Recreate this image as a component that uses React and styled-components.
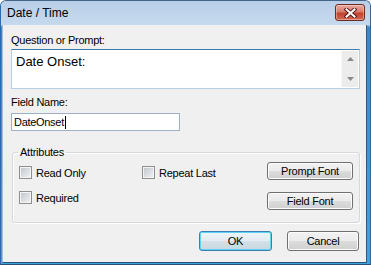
import styled, { createGlobalStyle } from 'styled-components';

const GlobalStyle = createGlobalStyle`
  html, body {
    margin: 0;
    padding: 0;
    background: #fff;
  }
  body {
    font-family: "Liberation Sans", Arial, sans-serif;
  }
`;

const Window = styled.div`
  width: 371px;
  height: 265px;
  box-sizing: border-box;
  display: flex;
  flex-direction: column;
  border: 1px solid #41648a;
  border-left-color: #2a6cab;
  border-bottom-color: #2b4f75;
  border-radius: 6px 6px 0 0;
  background: linear-gradient(to bottom, #bcd1e9 0, #c2d6ec 24px, #3f86c6 26px, #39a6dc 100%);
  overflow: hidden;
`;

const TitleBar = styled.div`
  height: 24px;
  flex: none;
  display: flex;
  justify-content: space-between;
  align-items: flex-start;
  padding: 0 5px 0 6px;
  background: linear-gradient(to bottom, #b9cfe8, #c6d9ee);
`;

const Title = styled.span`
  font-size: 12px;
  line-height: 14px;
  margin-top: 5px;
  color: #000;
`;

const CloseButton = styled.div`
  width: 30px;
  height: 17px;
  margin-top: 3px;
  box-sizing: border-box;
  border: 1px solid #6d2a20;
  border-radius: 3px;
  display: flex;
  align-items: center;
  justify-content: center;
  background: linear-gradient(to bottom, #e8a99e 0%, #d67d6f 45%, #c2432f 55%, #cf6a55 100%);
  box-shadow: inset 0 0 0 1px rgba(255, 255, 255, 0.35);
`;

const Client = styled.div`
  flex: 1;
  display: flex;
  flex-direction: column;
  margin: 0 3px 1px 1px;
  background: #f0f0f0;
  border: 1px solid #a7bcd4;
  border-top: none;
  border-right-color: #33577e;
  border-bottom-color: #2e5078;
  padding: 9px 6px 0 8px;
`;

const Label = styled.div`
  font-size: 11px;
  line-height: 13px;
  letter-spacing: -0.25px;
  color: #000;
  margin-top: ${p => p.$top || 0}px;
`;

const PromptBox = styled.div`
  margin-top: 2px;
  height: 40px;
  box-sizing: border-box;
  display: flex;
  background: #fff;
  border: 1px solid #b5cfe7;
  border-top-color: #3d7bad;
`;

const PromptText = styled.div`
  flex: 1;
  padding: 4px 0 0 4px;
  font-size: 13px;
  line-height: 15px;
  color: #000;
`;

const ScrollBar = styled.div`
  width: 16px;
  margin: 1px 1px 1px 0;
  display: flex;
  flex-direction: column;
  background: #ececec;
  border-left: 1px solid #f6f6f6;
`;

const ScrollArrow = styled.div`
  flex: 1;
  display: flex;
  align-items: center;
  justify-content: center;
  padding-${p => (p.$down ? 'top' : 'bottom')}: 2px;
`;

const NameInput = styled.div`
  margin-top: 4px;
  width: 169px;
  height: 18px;
  box-sizing: border-box;
  display: flex;
  align-items: center;
  padding-left: 2px;
  background: #fff;
  border: 1px solid #9fb0c4;
  font-size: 11px;
  letter-spacing: -0.3px;
  color: #000;
`;

const Caret = styled.span`
  display: inline-block;
  width: 1px;
  height: 13px;
  margin-left: 1px;
  background: #000;
`;

const GroupBox = styled.fieldset`
  margin: 15px 0 0 1px;
  width: 348px;
  box-sizing: border-box;
  padding: 3px 6px 12px 6px;
  border: 1px solid #d5d9dd;
  border-radius: 3px;
  box-shadow: 1px 1px 0 #fff, inset 1px 1px 0 #fff;
  display: flex;
  justify-content: space-between;
  min-width: 0;
`;

const Legend = styled.legend`
  padding: 0 2px;
  margin-left: -1px;
  font-size: 11px;
  line-height: 13px;
  letter-spacing: -0.25px;
  color: #000;
`;

const CheckGrid = styled.div`
  display: grid;
  grid-template-columns: 123px auto;
  grid-auto-rows: 13px;
  row-gap: 12px;
  padding-top: 4px;
  align-content: start;
`;

const CheckItem = styled.label`
  display: flex;
  align-items: center;
  gap: 4px;
  font-size: 11px;
  letter-spacing: -0.25px;
  color: #000;
  white-space: nowrap;
`;

const CheckBox = styled.span`
  width: 13px;
  height: 13px;
  box-sizing: border-box;
  flex: none;
  border: 1px solid #8e8f8f;
  padding: 1px;
  background: linear-gradient(135deg, #c4c8ce, #eef0f2) content-box, #f4f4f4;
`;

const ButtonColumn = styled.div`
  display: flex;
  flex-direction: column;
  gap: 12px;
`;

const Button = styled.div`
  width: ${p => p.$w}px;
  height: ${p => p.$h}px;
  box-sizing: border-box;
  display: flex;
  align-items: center;
  justify-content: center;
  font-size: 11px;
  letter-spacing: -0.25px;
  color: #000;
  border: 1px solid ${p => (p.$default ? '#3c7fb1' : '#707070')};
  border-radius: 3px;
  background: ${p =>
    p.$default
      ? 'linear-gradient(to bottom, #eef4f8 0%, #e4ecf1 50%, #d4e0e8 50%, #c9d7e0 100%)'
      : 'linear-gradient(to bottom, #f2f2f2 0%, #ebebeb 50%, #dddddd 50%, #cfcfcf 100%)'};
  box-shadow: inset 0 0 0 1px ${p => (p.$default ? '#5fd3f3' : '#fcfcfc')};
`;

const Footer = styled.div`
  margin: 8px 1px 0 0;
  display: flex;
  justify-content: flex-end;
  gap: 15px;
`;

const Arrow = ({ down }) => (
  <svg width="7" height="4" viewBox="0 0 7 4">
    <path d={down ? 'M0 0H7L3.5 4Z' : 'M0 4H7L3.5 0Z'} fill="#8a8a8a" />
  </svg>
);

const CloseIcon = () => (
  <svg width="13" height="10" viewBox="0 0 13 10">
    <path d="M2.5 1.5L10.5 8.5M10.5 1.5L2.5 8.5" stroke="#5b1d17" strokeWidth="4" strokeLinecap="square" />
    <path d="M2.5 1.5L10.5 8.5M10.5 1.5L2.5 8.5" stroke="#fff" strokeWidth="2" strokeLinecap="square" />
  </svg>
);

const Check = ({ children }) => (
  <CheckItem>
    <CheckBox />
    {children}
  </CheckItem>
);

export default function App() {
  return (
    <>
      <GlobalStyle />
      <Window>
        <TitleBar>
          <Title>Date / Time</Title>
          <CloseButton>
            <CloseIcon />
          </CloseButton>
        </TitleBar>
        <Client>
          <Label>Question or Prompt:</Label>
          <PromptBox>
            <PromptText>Date Onset:</PromptText>
            <ScrollBar>
              <ScrollArrow>
                <Arrow />
              </ScrollArrow>
              <ScrollArrow $down>
                <Arrow down />
              </ScrollArrow>
            </ScrollBar>
          </PromptBox>
          <Label $top={7}>Field Name:</Label>
          <NameInput>
            DateOnset
            <Caret />
          </NameInput>
          <GroupBox>
            <Legend>Attributes</Legend>
            <CheckGrid>
              <Check>Read Only</Check>
              <Check>Repeat Last</Check>
              <Check>Required</Check>
            </CheckGrid>
            <ButtonColumn>
              <Button $w={86} $h={18}>Prompt Font</Button>
              <Button $w={86} $h={18}>Field Font</Button>
            </ButtonColumn>
          </GroupBox>
          <Footer>
            <Button $w={73} $h={20} $default>OK</Button>
            <Button $w={72} $h={20}>Cancel</Button>
          </Footer>
        </Client>
      </Window>
    </>
  );
}
